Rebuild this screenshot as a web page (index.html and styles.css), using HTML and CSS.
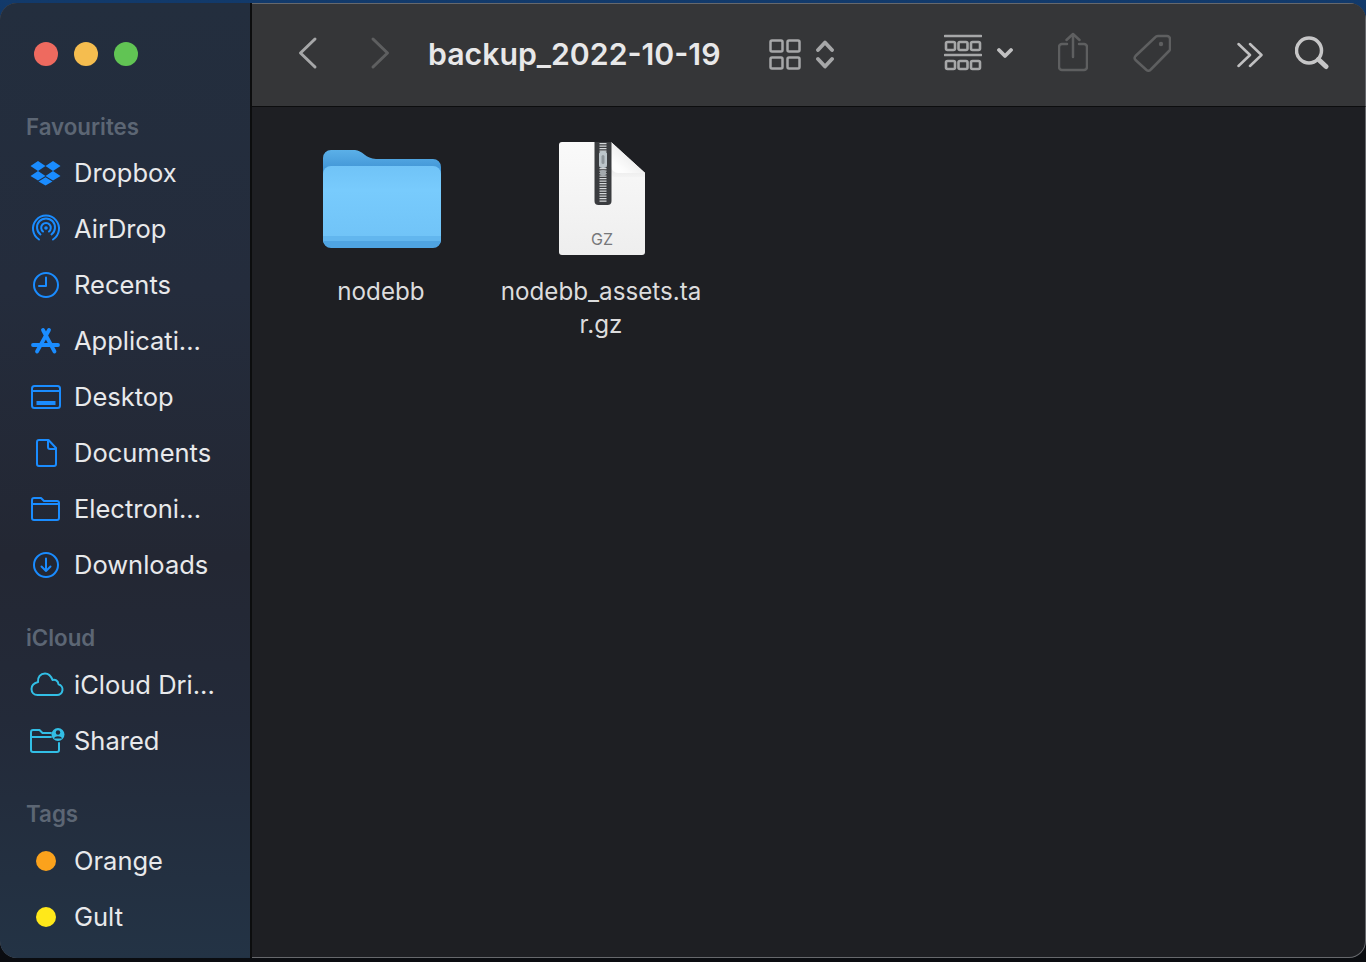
FILE: index.html
```html
<!DOCTYPE html>
<html lang="en">
<head>
<meta charset="utf-8">
<title>backup_2022-10-19</title>
<link rel="stylesheet" href="styles.css">
</head>
<body>
<div class="window">
  <aside class="sidebar">
    <div class="lights"><span class="light red"></span><span class="light yellow"></span><span class="light green"></span></div>
    <div class="heading first">Favourites</div>
    <div class="row"><svg class="ico blue" viewBox="0 0 30 30"><path class="fill" d="M7 3l7.500 5L7 13-.5 8zM22 3l7.500 5L22 13l-7.500-5zM7 13l7.500 5L7 22.500-.5 18zM22 13l7.500 5L22 22.500 14.500 18zM7.500 23.500l7-4.300 7 4.300-7 4z"/></svg><span class="label">Dropbox</span></div>
    <div class="row"><svg class="ico blue" viewBox="0 0 30 30"><g class="line"><path d="M8 25.500a13 13 0 1 1 14 0"/><path d="M9.500 20.500a9 9 0 1 1 11 0"/><path d="M12 17.500a4.800 4.800 0 1 1 6 0"/></g><circle class="fill" cx="15" cy="14" r="1.800"/></svg><span class="label">AirDrop</span></div>
    <div class="row"><svg class="ico blue" viewBox="0 0 30 30"><g class="line"><circle cx="15" cy="15" r="12"/><path d="M15 7.500V16H8"/></g></svg><span class="label">Recents</span></div>
    <div class="row"><svg class="ico blue" viewBox="0 0 30 30"><g class="line heavy"><path d="M12 4l11.500 21.500M18 4 6 25.500M2 19h25"/></g></svg><span class="label">Applicati...</span></div>
    <div class="row"><svg class="ico blue" viewBox="0 0 30 30"><g class="line"><rect x="1" y="4" width="28" height="22" rx="2.500"/><path d="M1 9h28"/></g><rect class="fill" x="5.500" y="19" width="19" height="4"/></svg><span class="label">Desktop</span></div>
    <div class="row"><svg class="ico blue" viewBox="0 0 30 30"><path class="line" d="M8 2h9.500L25 10v16a2 2 0 0 1-2 2H8a2 2 0 0 1-2-2V4a2 2 0 0 1 2-2zM17 2.500V9a2 2 0 0 0 2 2h6"/></svg><span class="label">Documents</span></div>
    <div class="row"><svg class="ico blue" viewBox="0 0 30 30"><path class="line" d="M1 24V6a2 2 0 0 1 2-2h7l3 3h13a2 2 0 0 1 2 2v15a2 2 0 0 1-2 2H3a2 2 0 0 1-2-2zM1 10h27"/></svg><span class="label">Electroni...</span></div>
    <div class="row"><svg class="ico blue" viewBox="0 0 30 30"><g class="line"><circle cx="15" cy="15" r="12"/><path d="M15 8.500V21M10.500 16.500 15 21l4.500-4.500"/></g></svg><span class="label">Downloads</span></div>

    <div class="heading">iCloud</div>
    <div class="row"><svg class="ico cyan" viewBox="0 0 30 30"><path class="line" d="M6.500 25H26a5.500 5.500 0 0 0 1.500-10.800C27 10.500 24 9 21.500 10 20 6 17 3.500 14 3.500 9.500 3.500 6.500 7 7 12 3 13 .5 15.500.5 19c0 3.500 2.500 6 6 6z"/></svg><span class="label">iCloud Dri...</span></div>
    <div class="row"><svg class="ico cyan" viewBox="0 0 30 30"><path class="line" d="M28 17v7a2 2 0 0 1-2 2H2a2 2 0 0 1-2-2V6a2 2 0 0 1 2-2h6.500l3 3H20M0 11h20"/><circle class="fill" cx="27" cy="8.500" r="6.500"/><circle cx="27" cy="6.500" r="2.200" fill="#232a38"/><path d="M23 12.500c1-3 7-3 8 0z" fill="#232a38"/></svg><span class="label">Shared</span></div>

    <div class="heading">Tags</div>
    <div class="row"><span class="dot-box"><span class="dot orange"></span></span><span class="label">Orange</span></div>
    <div class="row"><span class="dot-box"><span class="dot gold"></span></span><span class="label">Gult</span></div>
  </aside>

  <main class="main">
    <header class="toolbar">
      <svg class="tb w-back" viewBox="0 0 20 46"><path class="s-mid" d="M17 8 2.500 22 17 36"/></svg>
      <svg class="tb w-fwd" viewBox="0 0 20 46"><path class="s-dim" d="M3 8l14.500 14L3 36"/></svg>
      <div class="title">backup_2022-10-19</div>
      <svg class="tb w-view" viewBox="0 0 32 46"><g class="s-mid thin"><rect x="1.500" y="9.500" width="12" height="11" rx="1.500"/><rect x="18.500" y="9.500" width="12" height="11" rx="1.500"/><rect x="1.500" y="26.500" width="12" height="11" rx="1.500"/><rect x="18.500" y="26.500" width="12" height="11" rx="1.500"/></g></svg>
      <svg class="tb w-updown" viewBox="0 0 18 46"><g class="s-mid heavy"><path d="M2 19l7-7.500 7 7.500M2 28l7 7.500 7-7.500"/></g></svg>
      <svg class="tb w-group" viewBox="0 0 38 46"><g class="s-mid group"><path d="M1 5h36M1 24h36"/><rect x="2" y="11" width="9" height="8" rx="1.500"/><rect x="14.500" y="11" width="9" height="8" rx="1.500"/><rect x="27" y="11" width="9" height="8" rx="1.500"/><rect x="2" y="30" width="9" height="8" rx="1.500"/><rect x="14.500" y="30" width="9" height="8" rx="1.500"/><rect x="27" y="30" width="9" height="8" rx="1.500"/></g></svg>
      <svg class="tb w-drop" viewBox="0 0 16 46"><path class="s-light heavy" d="M2 19l6 6 6-6"/></svg>
      <svg class="tb w-share" viewBox="0 0 30 46"><path class="s-dim thin" d="M9 13H4a3 3 0 0 0-3 3v20a3 3 0 0 0 3 3h22a3 3 0 0 0 3-3V16a3 3 0 0 0-3-3h-5M15 3v23M8.500 9 15 3l6.500 6"/></svg>
      <svg class="tb w-tag" viewBox="0 0 38 46"><path class="s-dim thin" d="M22 6.500 2.500 25a3 3 0 0 0 0 4l11 10a3 3 0 0 0 4.300-.5L36 20a3 3 0 0 0 1-2V8a3 3 0 0 0-3-3h-9a4 4 0 0 0-3 1.500z"/><circle cx="28" cy="13" r="2.200" fill="#5e5f60"/></svg>
      <svg class="tb w-more" viewBox="0 0 26 46"><g class="s-light thin"><path d="M1.500 13 13 24 1.500 35M13 13l11.500 11L13 35"/></g></svg>
      <svg class="tb w-search" viewBox="0 0 34 46"><g class="s-bright"><circle cx="14" cy="19.500" r="12.500"/><path class="wide" d="M23.500 28.500l7.500 7"/></g></svg>
    </header>
    <section class="files">
      <div class="item">
        <div class="thumb">
          <svg class="folder" viewBox="0 0 118 99">
            <defs>
              <linearGradient id="backg" x1="0" y1="0" x2="0" y2="1"><stop offset="0" stop-color="#5bb0e8"/><stop offset=".18" stop-color="#4498d8"/></linearGradient>
              <linearGradient id="frontg" x1="0" y1="0" x2="0" y2="1"><stop offset="0" stop-color="#70c3f7"/><stop offset=".3" stop-color="#78cbfd"/><stop offset="1" stop-color="#6fc2f6"/></linearGradient>
            </defs>
            <path d="M0 9a8 8 0 0 1 8-8h24c7 0 11 9 21 9h57a8 8 0 0 1 8 8v72a8 8 0 0 1-8 8H8a8 8 0 0 1-8-8z" fill="url(#backg)"/>
            <path d="M0 25a8 8 0 0 1 8-8h102a8 8 0 0 1 8 8v65a8 8 0 0 1-8 8H8a8 8 0 0 1-8-8z" fill="url(#frontg)"/>
            <path d="M0 87h118v3a8 8 0 0 1-8 8H8a8 8 0 0 1-8-8z" fill="#62b6ee"/>
            <path d="M0 92h118v-1a8 8 0 0 1-8 8H8a8 8 0 0 1-8-8z" fill="#4fa4e2"/>
          </svg>
        </div>
        <div class="name">nodebb</div>
      </div>
      <div class="item">
        <div class="thumb">
          <svg class="zip" viewBox="0 0 86 114">
            <defs>
              <linearGradient id="foldg" x1="1" y1="0" x2="0" y2="1"><stop offset=".2" stop-color="#e4e4e4"/><stop offset=".8" stop-color="#fdfdfd"/></linearGradient>
              <linearGradient id="pageg" x1="0" y1="0" x2="0" y2="1"><stop offset="0" stop-color="#fafafa"/><stop offset="1" stop-color="#eeeeee"/></linearGradient>
              <linearGradient id="shadeg" x1="0" y1="0" x2="0" y2="1"><stop offset="0" stop-color="#cfcfcf"/><stop offset="1" stop-color="#f3f3f3"/></linearGradient>
            </defs>
            <path d="M3 1h49l34 31v79a3 3 0 0 1-3 3H3a3 3 0 0 1-3-3V4a3 3 0 0 1 3-3z" fill="url(#pageg)"/>
            <path d="M52 10v22a4 4 0 0 0 4 4h30v-4l-34-31z" fill="url(#shadeg)"/>
            <path d="M52 1l34 31H59a7 7 0 0 1-7-7z" fill="url(#foldg)"/>
            <path d="M35.500 1h17v59a4 4 0 0 1-4 4h-9a4 4 0 0 1-4-4z" fill="#3a3c3f"/>
            <path class="teeth" d="M44 2v60"/>
            <rect x="40" y="10" width="8" height="17" rx="3.500" fill="#bcc5ca"/>
            <rect x="42.500" y="14" width="3" height="9" rx="1.500" fill="#8f979c"/>
            <circle cx="44" cy="32" r="3" fill="#a3a9ad"/>
            <text class="gz" x="43" y="104" text-anchor="middle">GZ</text>
          </svg>
        </div>
        <div class="name">nodebb_assets.tar.gz</div>
      </div>
    </section>
  </main>
</div>
</body>
</html>
```
FILE: styles.css
```css
* { box-sizing: border-box; }
html, body { margin: 0; height: 100%; }
body {
  padding-top: 3px;
  background: linear-gradient(180deg, #123a6b 0, #0a1f3a 30%, #0a0c10 100%);
  font-family: Inter, "Noto Sans", sans-serif;
  overflow: hidden;
}
.window {
  display: flex;
  width: 1366px;
  height: 955px;
  border-radius: 17px;
  overflow: hidden;
  box-shadow: inset 0 0 0 1px #66686c;
  background: #1e1f23;
}
.sidebar {
  width: 250px;
  flex: none;
  padding-top: 39px;
  background: linear-gradient(180deg, #232e3e 0, #242c3c 30%, #232733 58%, #232a39 75%, #233345 100%);
}
.lights { display: flex; gap: 16px; padding-left: 34px; margin-bottom: 43px; }
.light { width: 24px; height: 24px; border-radius: 50%; }
.red { background: #ee6a5f; }
.yellow { background: #f5bd4f; }
.green { background: #61c454; }
.heading {
  height: 37px;
  line-height: 36px;
  margin-top: 27px;
  padding-left: 26px;
  font-size: 22.300px;
  font-weight: 600;
  color: #5c6674;
}
.heading.first { margin-top: 0; height: 36px; }
.row {
  display: flex;
  align-items: center;
  height: 56px;
  padding-left: 31px;
  gap: 13px;
  font-size: 25.500px;
  color: #e8e9eb;
}
.label { padding-bottom: 2px; }
.ico { width: 30px; height: 30px; flex: none; overflow: visible; }
.fill { stroke: none; }
.blue .fill { fill: #1a8cff; }
.cyan .fill { fill: #32bfe6; }
.line { fill: none; stroke-width: 2; stroke-linecap: round; stroke-linejoin: round; }
.blue .line { stroke: #1a8cff; }
.cyan .line { stroke: #32bfe6; }
.line.heavy { stroke-width: 3; }
.dot-box { display: flex; justify-content: center; align-items: center; width: 30px; flex: none; }
.dot { width: 20px; height: 20px; border-radius: 50%; }
.orange { background: #fba21c; }
.gold { background: #ffe81a; }

.main { flex: 1; min-width: 0; border-left: 2px solid #0c0d0e; display: flex; flex-direction: column; }
.toolbar {
  display: flex;
  align-items: flex-start;
  height: 104px;
  padding: 27px 0 0 46px;
  background: #353638;
  border-top: 1px solid #66686c;
  border-right: 1px solid #66686c;
  border-bottom: 1px solid #0c0d0e;
  flex: none;
}
.tb { height: 46px; flex: none; fill: none; stroke-linecap: round; stroke-linejoin: round; }
.tb g, .tb path { fill: none; }
.s-mid, .s-mid * { stroke: #a6a7a8; stroke-width: 3; fill: none; }
.s-dim, .s-dim * { stroke: #5e5f60; stroke-width: 3; }
.s-light, .s-light * { stroke: #c0c0c1; stroke-width: 3; }
.s-bright, .s-bright * { stroke: #c6c6c7; stroke-width: 3.500; fill: none; }
.s-bright .wide { stroke-width: 5; }
.thin, .thin * { stroke-width: 2.500; }
.heavy, .heavy * { stroke-width: 3.800; }
.group, .group * { stroke-width: 2.600; }
.w-back { width: 20px; }
.w-fwd { width: 20px; margin-left: 52px; }
.title {
  margin-left: 38px;
  height: 46px;
  line-height: 46px;
  font-size: 30.250px;
  font-weight: 600;
  color: #e8e8e9;
  white-space: nowrap;
}
.w-view { width: 32px; margin-left: 48px; }
.w-updown { width: 18px; margin-left: 15px; }
.w-group { width: 38px; margin-left: 110px; }
.w-drop { width: 16px; margin-left: 15px; }
.w-share { width: 30px; margin-left: 45px; }
.w-tag { width: 38px; margin-left: 45px; }
.w-more { width: 26px; margin-left: 66px; }
.w-search { width: 34px; margin-left: 32px; }

.files { display: flex; gap: 12px; padding: 26px 0 0 25px; }
.item { width: 208px; display: flex; flex-direction: column; align-items: center; }
.thumb { height: 130px; display: flex; align-items: center; justify-content: center; }
.folder { width: 118px; height: 99px; margin-top: 1px; margin-left: 2px; }
.zip { width: 86px; height: 114px; margin-top: -1px; margin-left: 2px; }
.teeth { stroke: #d5d8da; stroke-width: 7; stroke-dasharray: 1.200 1.300; fill: none; }
.gz { font-family: Inter, sans-serif; font-size: 16px; fill: #77787a; }
.name {
  margin-top: 12px;
  width: 208px;
  text-align: center;
  font-size: 24.200px;
  line-height: 33px;
  color: #dcdcdd;
  word-break: break-all;
}
```
